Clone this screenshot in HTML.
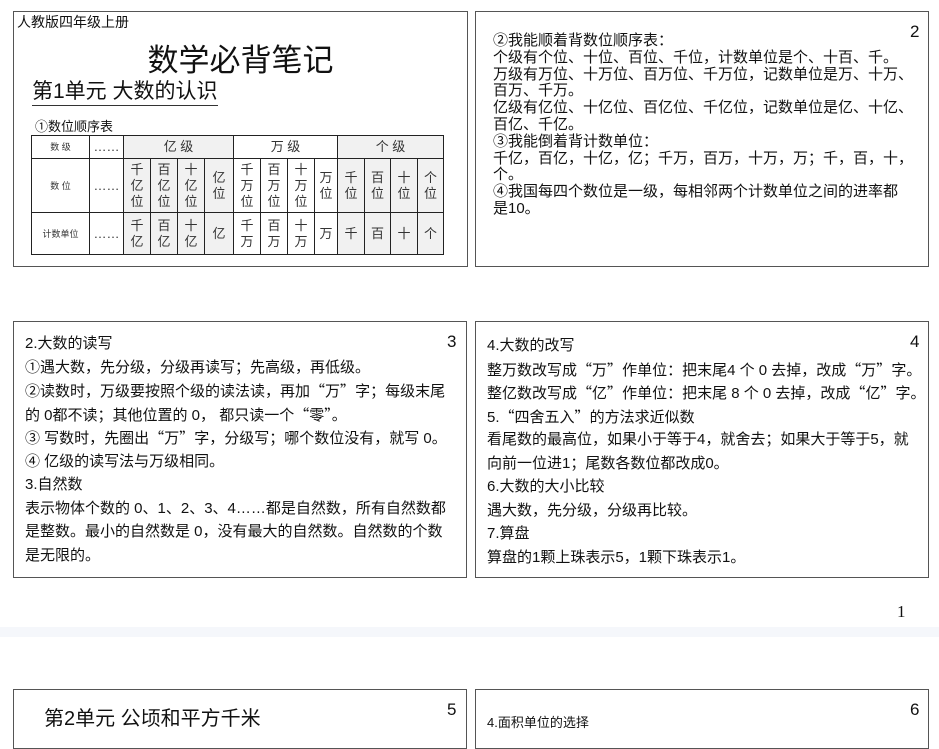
<!DOCTYPE html>
<html><head><meta charset="utf-8"><style>
*{margin:0;padding:0;box-sizing:border-box}
body{width:939px;height:722px;overflow:hidden;background:#fff;position:relative;font-family:"Liberation Sans","Noto Sans CJK SC",sans-serif;color:#111}
.box{position:absolute;border:1px solid #555;background:#fff;overflow:hidden}
.abs{position:absolute;white-space:nowrap}
.num{position:absolute;font-size:17px}
table{position:absolute;border-collapse:collapse;table-layout:fixed}
td{border:1px solid #222;text-align:center;vertical-align:middle;font-size:13px;line-height:16px;padding:0;color:#333}
.g{background:#f1f1f1}
.s{font-size:9px}
.t3 div{height:23.5px;line-height:23.5px;font-size:15px}
.q{font-family:"Noto Sans CJK SC",sans-serif}
</style></head><body>

<div class="box" style="left:13px;top:11px;width:455px;height:256px">
 <div class="abs" style="left:3px;top:0px;font-size:14px">人教版四年级上册</div>
 <div class="abs" style="left:0;width:453px;text-align:center;top:23px;font-size:31px">数学必背笔记</div>
 <div class="abs" style="left:18px;top:67px;font-size:21px;border-bottom:1px solid #333;line-height:26px">第1单元 大数的认识</div>
 <div class="abs" style="left:21px;top:104px;font-size:13px">①数位顺序表</div>
 <table style="left:17px;top:123px;width:413px">
  <colgroup><col style="width:58px"><col style="width:34px"><col style="width:27px"><col style="width:27px"><col style="width:27px"><col style="width:29px"><col style="width:27px"><col style="width:27px"><col style="width:27px"><col style="width:23px"><col style="width:27px"><col style="width:26px"><col style="width:27px"><col style="width:26px"></colgroup>
  <tr style="height:23px"><td class="s">数 级</td><td>……</td><td class="g" colspan="4">亿 级</td><td colspan="4">万 级</td><td class="g" colspan="4">个 级</td></tr>
  <tr style="height:54px"><td class="s">数 位</td><td>……</td><td class="g">千<br>亿<br>位</td><td class="g">百<br>亿<br>位</td><td class="g">十<br>亿<br>位</td><td class="g">亿<br>位</td><td>千<br>万<br>位</td><td>百<br>万<br>位</td><td>十<br>万<br>位</td><td>万<br>位</td><td class="g">千<br>位</td><td class="g">百<br>位</td><td class="g">十<br>位</td><td class="g">个<br>位</td></tr>
  <tr style="height:42px"><td class="s">计数单位</td><td>……</td><td class="g">千<br>亿</td><td class="g">百<br>亿</td><td class="g">十<br>亿</td><td class="g">亿</td><td>千<br>万</td><td>百<br>万</td><td>十<br>万</td><td>万</td><td class="g">千</td><td class="g">百</td><td class="g">十</td><td class="g">个</td></tr>
 </table>
</div>

<div class="box" style="left:475px;top:11px;width:454px;height:256px">
 <div class="num" style="left:434px;top:10px">2</div>
 <div class="abs" style="left:17px;top:21px;font-size:15px;line-height:16.8px;width:430px;white-space:normal">②我能顺着背数位顺序表：<br>个级有个位、十位、百位、千位，计数单位是个、十百、千。<br>万级有万位、十万位、百万位、千万位，记数单位是万、十万、<br>百万、千万。<br>亿级有亿位、十亿位、百亿位、千亿位，记数单位是亿、十亿、<br>百亿、千亿。<br>③我能倒着背计数单位：<br>千亿，百亿，十亿，亿；千万，百万，十万，万；千，百，十，<br>个。<br>④我国每四个数位是一级，每相邻两个计数单位之间的进率都<br>是10。</div>
</div>

<div class="box" style="left:13px;top:321px;width:454px;height:257px">
 <div class="num" style="left:433px;top:10px">3</div>
 <div class="abs t3" style="left:11px;top:10px">
  <div>2.大数的读写</div>
  <div>①遇大数，先分级，分级再读写；先高级，再低级。</div>
  <div>②读数时，万级要按照个级的读法读，再加<span class="q">“</span>万<span class="q">”</span>字；每级末尾</div>
  <div>的 0都不读；其他位置的 0， 都只读一个<span class="q">“</span>零<span class="q">”</span>。</div>
  <div>③ 写数时，先圈出<span class="q">“</span>万<span class="q">”</span>字，分级写；哪个数位没有，就写 0。</div>
  <div>④ 亿级的读写法与万级相同。</div>
  <div>3.自然数</div>
  <div>表示物体个数的 0、1、2、3、4……都是自然数，所有自然数都</div>
  <div>是整数。最小的自然数是 0，没有最大的自然数。自然数的个数</div>
  <div>是无限的。</div>
 </div>
</div>

<div class="box" style="left:475px;top:321px;width:454px;height:257px">
 <div class="num" style="left:434px;top:10px">4</div>
 <div class="abs t3" style="left:11px;top:12px">
  <div>4.大数的改写</div>
  <div>整万数改写成<span class="q">“</span>万<span class="q">”</span>作单位：把末尾4 个 0 去掉，改成<span class="q">“</span>万<span class="q">”</span>字。</div>
  <div>整亿数改写成<span class="q">“</span>亿<span class="q">”</span>作单位：把末尾 8 个 0 去掉，改成<span class="q">“</span>亿<span class="q">”</span>字。</div>
  <div>5.<span class="q">“</span>四舍五入<span class="q">”</span>的方法求近似数</div>
  <div>看尾数的最高位，如果小于等于4，就舍去；如果大于等于5，就</div>
  <div>向前一位进1；尾数各数位都改成0。</div>
  <div>6.大数的大小比较</div>
  <div>遇大数，先分级，分级再比较。</div>
  <div>7.算盘</div>
  <div>算盘的1颗上珠表示5，1颗下珠表示1。</div>
 </div>
</div>

<div class="num" style="left:897px;top:602px;font-family:'Liberation Serif',serif">1</div>
<div class="abs" style="left:0;top:627px;width:939px;height:10px;background:#f5f7fb"></div>

<div class="box" style="left:13px;top:689px;width:454px;height:60px">
 <div class="num" style="left:433px;top:10px">5</div>
 <div class="abs" style="left:30px;top:12px;font-size:20px">第2单元 公顷和平方千米</div>
</div>
<div class="box" style="left:475px;top:689px;width:454px;height:60px">
 <div class="num" style="left:434px;top:10px">6</div>
 <div class="abs" style="left:11px;top:22px;font-size:13px">4.面积单位的选择</div>
</div>
</body></html>
